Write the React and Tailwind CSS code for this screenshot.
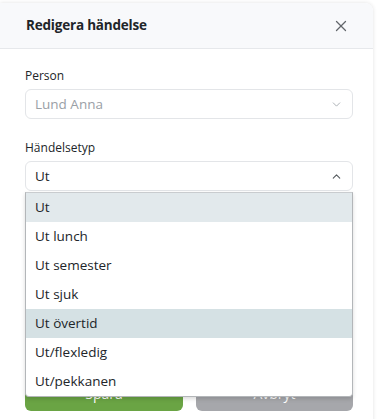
import { X, ChevronDown, ChevronUp } from "lucide-react";

const options = [
  { name: "Ut", bg: "bg-[#e2e9ec]" },
  { name: "Ut lunch" },
  { name: "Ut semester" },
  { name: "Ut sjuk" },
  { name: "Ut övertid", bg: "bg-[#d5e1e4]" },
  { name: "Ut/flexledig" },
  { name: "Ut/pekkanen" },
];

function App() {
  return (
    <div className="w-[377px] h-[419px] bg-white overflow-hidden pt-[3px] font-['Open_Sans',sans-serif] text-[#212529]">
      <div className="relative w-[373px] h-[440px] bg-white rounded-tr-lg shadow-[0_0_4px_rgba(0,0,0,0.12)]">
        {/* header */}
        <div className="h-[46px] flex items-center justify-between pl-[26px] pr-[23px] bg-[#f8f9fb] border-b border-[#e6e8eb] rounded-tr-lg">
          <h2 className="text-[13.5px] font-bold tracking-[-0.2px]">Redigera händelse</h2>
          <X size={18} strokeWidth={1.7} className="text-[#62666a]" />
        </div>

        <div className="px-[25px] pt-[19px]">
          <label className="block text-[12px] leading-[16px] mb-[5px]">Person</label>
          <div className="h-[30px] w-[328px] flex items-center justify-between pl-[9px] pr-[9px] border border-[#e3e5e8] rounded-md">
            <span className="text-[13.5px] text-[#9aa0a6]">Lund Anna</span>
            <ChevronDown size={13} strokeWidth={1.5} className="text-[#9aa0a6]" />
          </div>

          <label className="block text-[12px] leading-[16px] mt-[21px] mb-[5px]">Händelsetyp</label>
          <div className="h-[30px] w-[328px] flex items-center justify-between pl-[9px] pr-[9px] border border-[#e3e5e8] rounded-md">
            <span className="text-[13.5px]">Ut</span>
            <ChevronUp size={13} strokeWidth={2} className="text-[#555a5e]" />
          </div>

          <div className="flex gap-[13px] mt-[184px] w-[328px]">
            <button className="shrink-0 h-[36px] w-[158px] rounded-md bg-[#6aa444] text-white text-[14px]">Spara</button>
            <button className="shrink-0 h-[36px] w-[157px] rounded-md bg-[#a6a7ab] text-white text-[14px]">Avbryt</button>
          </div>
        </div>

        {/* open dropdown */}
        <ul className="absolute left-[25px] top-[189px] w-[328px] bg-white border border-[#b3b6b9] border-t-[#c9cccf] rounded-b-sm shadow-[0_2px_4px_rgba(0,0,0,0.15)]">
          {options.map((o) => (
            <li key={o.name} className={`h-[29px] flex items-center pl-[9px] text-[13.5px] ${o.bg || ""}`}>
              {o.name}
            </li>
          ))}
        </ul>
      </div>
    </div>
  );
}

export default App;
